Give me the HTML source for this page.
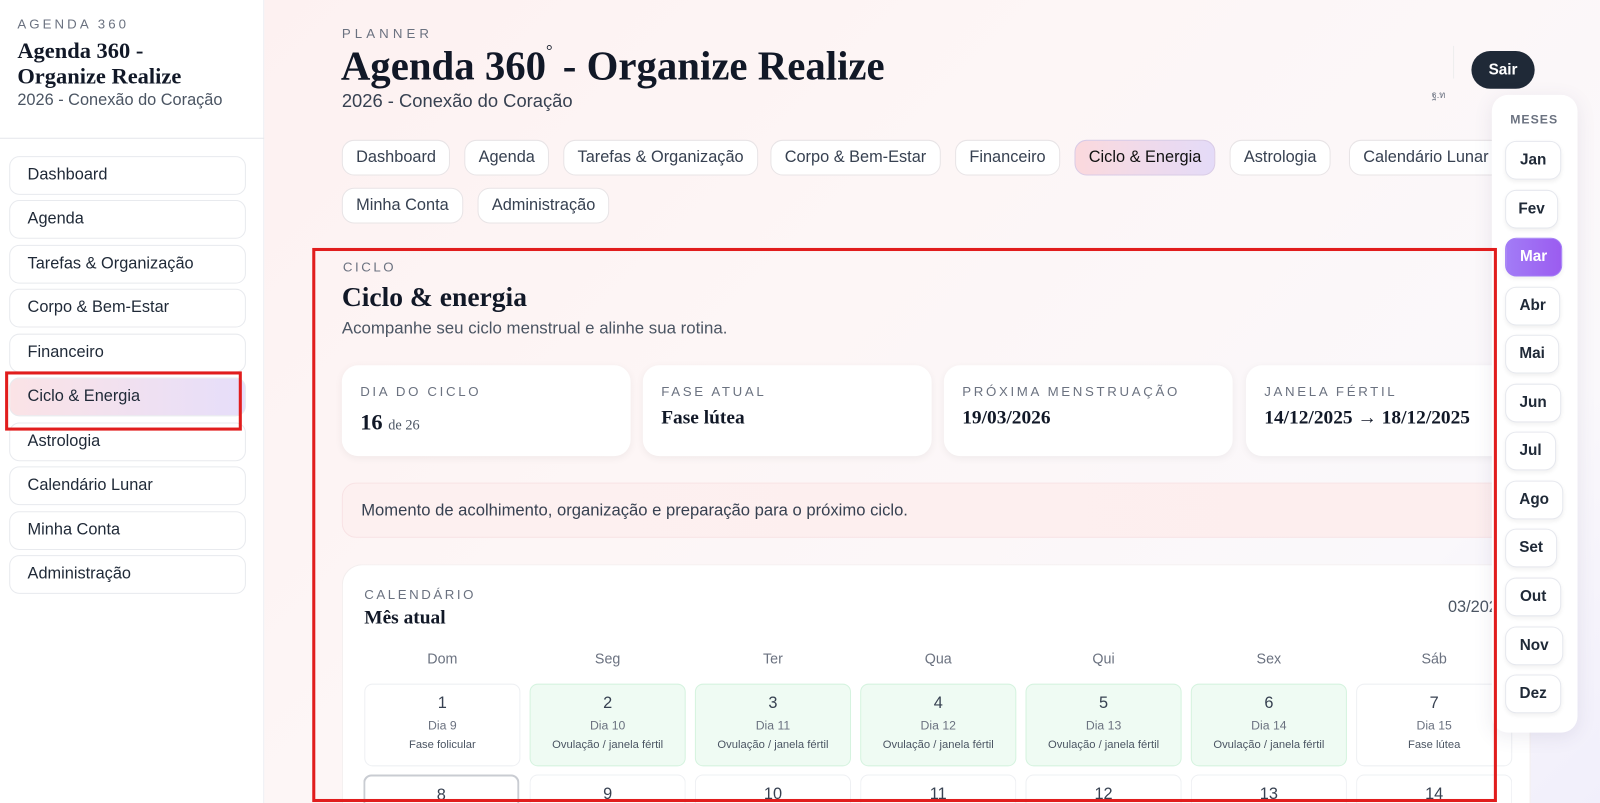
<!DOCTYPE html>
<html><head><meta charset="utf-8"><style>
*{box-sizing:border-box;margin:0;padding:0}
html,body{width:1600px;height:803px;overflow:hidden}
body{font-family:"Liberation Sans",sans-serif;color:#1f2937;background:#fff;position:relative}
#w{position:absolute;left:0;top:0;width:1568px;height:787px;transform:scale(1.0204);transform-origin:0 0;overflow:hidden}
.side{position:absolute;left:0;top:0;width:259px;height:787px;background:#fff;border-right:1px solid #eceef2}
.side .k{position:absolute;left:17px;top:16px;font-size:13px;letter-spacing:3px;color:#6b7280}
.side h1{position:absolute;left:17px;top:37px;font-family:"Liberation Serif",serif;font-size:22px;line-height:25px;font-weight:bold;color:#111827}
.side .s{position:absolute;left:17px;top:90px;font-size:16px;color:#4b5563}
.side .hr{position:absolute;left:0;top:135px;width:259px;border-top:1px solid #e5e7eb}
.si{position:absolute;left:9px;width:232px;height:38px;border:1px solid #e8eaee;border-radius:10px;padding-left:17px;line-height:36px;font-size:16px;color:#1f2937;background:#fff}
.si.a{background:linear-gradient(90deg,#fbe3e6,#e6defa)}
.main{position:absolute;left:259px;top:0;width:1309px;height:787px;background:linear-gradient(135deg,#fdf1f1 0%,#fdf6f6 40%,#faf8fb 80%,#f1effb 100%)}
.abs{position:absolute}
.pill{position:absolute;height:35px;border:1px solid #e8e4e6;border-radius:12px;background:#fff;line-height:33px;font-size:16px;padding:0 13px;color:#374151;white-space:nowrap}
.pill.a{background:linear-gradient(90deg,#fbd9dd,#e4dbf8);border-color:#d9cbe6;color:#111}
.card{position:absolute;top:358px;width:283px;height:89px;background:#fff;border-radius:16px;box-shadow:0 2px 8px rgba(0,0,0,.05)}
.card .l{position:absolute;left:18px;top:18px;font-size:13px;letter-spacing:2.6px;color:#6b7280;white-space:nowrap}
.card .v{position:absolute;left:18px;top:41px;font-family:"Liberation Serif",serif;font-weight:bold;font-size:19px;color:#111827;white-space:nowrap}
.cell{position:absolute;width:153px;height:81px;border:1px solid #eef0f3;border-radius:8px;background:#fff;text-align:center}
.cell.g{background:#effbf3;border-color:#d5f3df}
.cell.r2{height:28px;border-bottom:none;border-radius:8px 8px 0 0}
.cell b{display:block;font-weight:normal;font-size:16px;margin-top:10px;color:#374151}
.cell i{display:block;font-style:normal;font-size:12px;color:#6b7280;margin-top:5px}
.cell u{display:block;text-decoration:none;font-size:11px;color:#4b5563;margin-top:6px;white-space:nowrap}
.wd{position:absolute;top:637px;width:153px;text-align:center;font-size:14px;color:#6b7280}
.mp{position:absolute;left:1462px;top:93px;width:84px;height:625px;background:#fff;border-radius:16px;box-shadow:0 4px 18px rgba(80,70,120,.1)}
.mb{position:absolute;height:38px;border:1px solid #e6e8ee;border-radius:11px;background:#fff;font-weight:bold;font-size:15px;color:#1f2937;text-align:center;line-height:36px;box-shadow:0 2px 4px rgba(0,0,0,.06)}
.red{position:absolute;border:3px solid #e11d1d}
</style></head><body><div id="w">
<div class="side">
<div class="k">AGENDA 360</div>
<h1>Agenda 360 -<br>Organize Realize</h1>
<div class="s">2026 - Conexão do Coração</div>
<div class="hr"></div>
<div class="si" style="top:153px">Dashboard</div>
<div class="si" style="top:196px">Agenda</div>
<div class="si" style="top:240px">Tarefas &amp; Organização</div>
<div class="si" style="top:283px">Corpo &amp; Bem-Estar</div>
<div class="si" style="top:327px">Financeiro</div>
<div class="si a" style="top:370px">Ciclo &amp; Energia</div>
<div class="si" style="top:414px">Astrologia</div>
<div class="si" style="top:457px">Calendário Lunar</div>
<div class="si" style="top:501px">Minha Conta</div>
<div class="si" style="top:544px">Administração</div>
</div>
<div class="main"></div>
<div class="abs" style="left:335px;top:25px;font-size:13px;letter-spacing:4px;color:#6b7280">PLANNER</div>
<div class="abs" style="left:334px;top:41px;font-family:'Liberation Serif',serif;font-weight:bold;font-size:40px;color:#111827;white-space:nowrap">Agenda 360<sup style="font-size:16px;font-weight:normal;vertical-align:23px">°</sup> - Organize Realize</div>
<div class="abs" style="left:335px;top:89px;font-size:18px;color:#374151">2026 - Conexão do Coração</div>
<div class="abs" style="left:1424px;top:45px;width:1px;height:32px;background:#eee"></div>
<div class="abs" style="left:1403px;top:86px;font-size:9px;color:#6b7280">ฐ.ท</div>
<div class="abs" style="left:1442px;top:50px;width:62px;height:37px;border-radius:19px;background:#1f2937;color:#fff;font-size:15px;font-weight:bold;text-align:center;line-height:37px">Sair</div>

<div class="pill" style="left:335px;top:137px">Dashboard</div>
<div class="pill" style="left:455px;top:137px">Agenda</div>
<div class="pill" style="left:552px;top:137px">Tarefas &amp; Organização</div>
<div class="pill" style="left:755px;top:137px">Corpo &amp; Bem-Estar</div>
<div class="pill" style="left:936px;top:137px">Financeiro</div>
<div class="pill a" style="left:1053px;top:137px">Ciclo &amp; Energia</div>
<div class="pill" style="left:1205px;top:137px">Astrologia</div>
<div class="pill" style="left:1322px;top:137px">Calendário Lunar</div>
<div class="pill" style="left:335px;top:184px">Minha Conta</div>
<div class="pill" style="left:468px;top:184px">Administração</div>

<div class="abs" style="left:336px;top:254px;font-size:13px;letter-spacing:2.5px;color:#6b7280">CICLO</div>
<div class="abs" style="left:335px;top:276px;font-family:'Liberation Serif',serif;font-weight:bold;font-size:27px;color:#111827">Ciclo &amp; energia</div>
<div class="abs" style="left:335px;top:313px;font-size:16.5px;color:#4b5563">Acompanhe seu ciclo menstrual e alinhe sua rotina.</div>

<div class="card" style="left:335px"><div class="l">DIA DO CICLO</div><div class="v" style="font-size:22px;top:43px">16 <span style="font-size:14px;font-weight:normal;color:#4b5563">de 26</span></div></div>
<div class="card" style="left:630px"><div class="l">FASE ATUAL</div><div class="v">Fase lútea</div></div>
<div class="card" style="left:925px"><div class="l">PRÓXIMA MENSTRUAÇÃO</div><div class="v">19/03/2026</div></div>
<div class="card" style="left:1221px"><div class="l">JANELA FÉRTIL</div><div class="v">14/12/2025 → 18/12/2025</div></div>

<div class="abs" style="left:335px;top:473px;width:1160px;height:54px;border:1px solid #f8e2e4;border-radius:14px;background:linear-gradient(90deg,#fdf0f0,#fdeeee);padding:17px 0 0 18px;font-size:16.3px;color:#374151">Momento de acolhimento, organização e preparação para o próximo ciclo.</div>

<div class="abs" style="left:335px;top:553px;width:1165px;height:234px;background:#fff;border-radius:20px 20px 0 0;border:1px solid #f3eeee;border-bottom:none"></div>
<div class="abs" style="left:357px;top:575px;font-size:13px;letter-spacing:2.5px;color:#6b7280">CALENDÁRIO</div>
<div class="abs" style="left:357px;top:595px;font-family:'Liberation Serif',serif;font-weight:bold;font-size:19px;color:#111827">Mês atual</div>
<div class="abs" style="left:1419px;top:587px;font-size:16px;color:#4b5563">03/2026</div>

<div class="wd" style="left:357px">Dom</div><div class="wd" style="left:519px">Seg</div><div class="wd" style="left:681px">Ter</div><div class="wd" style="left:843px">Qua</div><div class="wd" style="left:1005px">Qui</div><div class="wd" style="left:1167px">Sex</div><div class="wd" style="left:1329px">Sáb</div>

<div class="cell" style="left:357px;top:670px"><b>1</b><i>Dia 9</i><u>Fase folicular</u></div>
<div class="cell g" style="left:519px;top:670px"><b>2</b><i>Dia 10</i><u>Ovulação / janela fértil</u></div>
<div class="cell g" style="left:681px;top:670px"><b>3</b><i>Dia 11</i><u>Ovulação / janela fértil</u></div>
<div class="cell g" style="left:843px;top:670px"><b>4</b><i>Dia 12</i><u>Ovulação / janela fértil</u></div>
<div class="cell g" style="left:1005px;top:670px"><b>5</b><i>Dia 13</i><u>Ovulação / janela fértil</u></div>
<div class="cell g" style="left:1167px;top:670px"><b>6</b><i>Dia 14</i><u>Ovulação / janela fértil</u></div>
<div class="cell" style="left:1329px;top:670px"><b>7</b><i>Dia 15</i><u>Fase lútea</u></div>
<div class="cell r2" style="left:356px;top:759px;border:2px solid #c9ccd2;border-bottom:none"><b>8</b></div>
<div class="cell r2" style="left:519px;top:759px"><b>9</b></div>
<div class="cell r2" style="left:681px;top:759px"><b>10</b></div>
<div class="cell r2" style="left:843px;top:759px"><b>11</b></div>
<div class="cell r2" style="left:1005px;top:759px"><b>12</b></div>
<div class="cell r2" style="left:1167px;top:759px"><b>13</b></div>
<div class="cell r2" style="left:1329px;top:759px"><b>14</b></div>

<div class="mp"></div>
<div class="abs" style="left:1480px;top:110px;font-size:12px;font-weight:bold;letter-spacing:1px;color:#6b7280">MESES</div>
<div class="mb" style="left:1475px;top:138px;width:55px">Jan</div>
<div class="mb" style="left:1475px;top:186px;width:52px">Fev</div>
<div class="mb" style="left:1475px;top:233px;width:56px;background:linear-gradient(90deg,#a27cf6,#9b5cf0);color:#fff;border-color:#a27cf6">Mar</div>
<div class="mb" style="left:1475px;top:281px;width:54px">Abr</div>
<div class="mb" style="left:1475px;top:328px;width:53px">Mai</div>
<div class="mb" style="left:1475px;top:376px;width:55px">Jun</div>
<div class="mb" style="left:1475px;top:423px;width:50px">Jul</div>
<div class="mb" style="left:1475px;top:471px;width:57px">Ago</div>
<div class="mb" style="left:1475px;top:518px;width:51px">Set</div>
<div class="mb" style="left:1475px;top:566px;width:55px">Out</div>
<div class="mb" style="left:1475px;top:614px;width:57px">Nov</div>
<div class="mb" style="left:1475px;top:661px;width:55px">Dez</div>

<div class="red" style="left:5px;top:364px;width:232px;height:58px"></div>
<div class="red" style="left:306px;top:243px;width:1161px;height:543px"></div>
</div></body></html>
